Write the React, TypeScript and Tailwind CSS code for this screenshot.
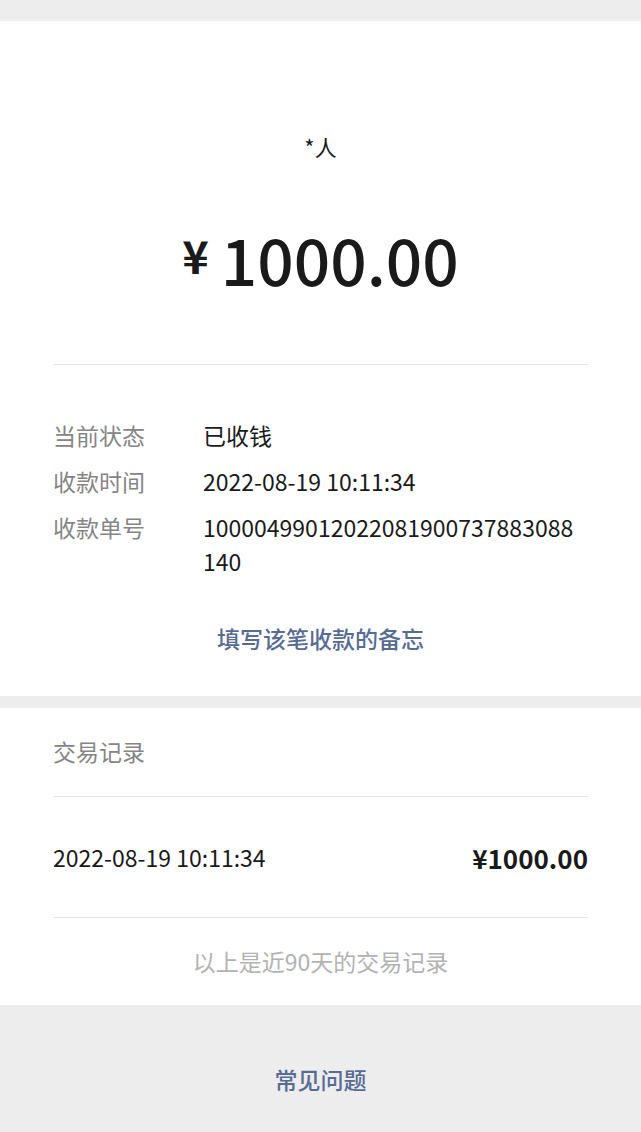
import React from 'react';

const font = { fontFamily: '"Noto Sans CJK SC", "Noto Sans", sans-serif' };

const InfoRow: React.FC<{ label: string; value: string }> = ({ label, value }) => (
  <div className="flex">
    <div className="w-[150px] shrink-0 text-[#858585]">{label}</div>
    <div className="w-[376px] break-all text-[#1a1a1a]">{value}</div>
  </div>
);

export default function App() {
  return (
    <div className="min-h-[1132px] bg-[#ededed] pt-[21px]" style={font}>
      <div className="bg-white px-[53px]">
        <div className="pt-[110px] text-center text-[22px] leading-[30px] text-[#1a1a1a]">*人</div>
        <div className="mt-[65px] flex items-start justify-center text-[#1a1a1a]">
          <span className="mt-[6px] mr-[12px] text-[45px] font-semibold leading-none">¥</span>
          <span className="text-[64px] font-medium leading-none">1000.00</span>
        </div>
        <div className="mt-[74px] h-px bg-[#e5e5e5]" />
        <div className="flex flex-col gap-[12px] pt-[53px] text-[23px] leading-[34px]">
          <InfoRow label="当前状态" value="已收钱" />
          <InfoRow label="收款时间" value="2022-08-19 10:11:34" />
          <InfoRow label="收款单号" value="10000499012022081900737883088140" />
        </div>
        <div className="pt-[45px] pb-[43px] text-center text-[23px] font-medium leading-[30px] text-[#576b95]">
          填写该笔收款的备忘
        </div>
      </div>
      <div className="mt-[12px] bg-white px-[53px]">
        <div className="pt-[28px] pb-[30px] text-[23px] leading-[30px] text-[#858585]">交易记录</div>
        <div className="h-px bg-[#e5e5e5]" />
        <div className="flex h-[120px] items-center justify-between text-[#1a1a1a]">
          <span className="text-[23px]">2022-08-19 10:11:34</span>
          <span className="text-[26px] font-semibold">¥1000.00</span>
        </div>
        <div className="h-px bg-[#e5e5e5]" />
        <div className="pt-[28px] pb-[29px] text-center text-[23px] leading-[30px] text-[#b2b2b2]">
          以上是近90天的交易记录
        </div>
      </div>
      <div className="pt-[59px] text-center text-[23px] font-medium leading-[30px] text-[#576b95]">常见问题</div>
    </div>
  );
}
